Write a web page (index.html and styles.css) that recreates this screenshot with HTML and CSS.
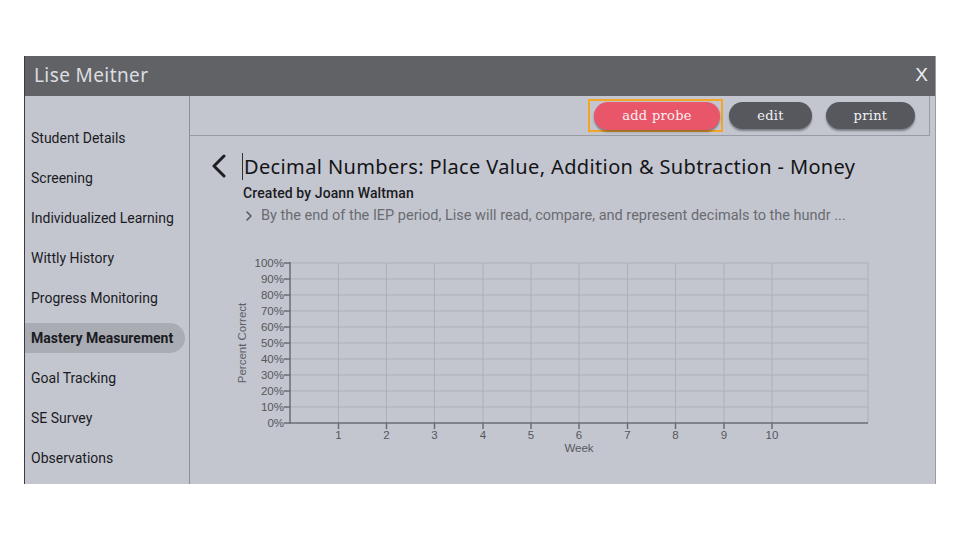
FILE: index.html
```html
<!DOCTYPE html>
<html>
<head>
<meta charset="utf-8">
<link rel="stylesheet" href="styles.css">
</head>
<body>
<div class="frame">
  <header class="topbar">
    <span class="student">Lise Meitner</span>
    <span class="close">X</span>
  </header>
  <div class="body">
    <nav class="sidebar">
      <div class="nav-item">Student Details</div>
      <div class="nav-item">Screening</div>
      <div class="nav-item">Individualized Learning</div>
      <div class="nav-item">Wittly History</div>
      <div class="nav-item">Progress Monitoring</div>
      <div class="nav-item active">Mastery Measurement</div>
      <div class="nav-item">Goal Tracking</div>
      <div class="nav-item">SE Survey</div>
      <div class="nav-item">Observations</div>
    </nav>
    <main class="main">
      <div class="toolbar">
        <span class="focus-ring"><button class="btn btn-add">add probe</button></span>
        <button class="btn btn-edit">edit</button>
        <button class="btn btn-print">print</button>
      </div>
      <section class="content">
        <div class="title-row">
          <svg class="back" width="16" height="24" viewBox="0 0 16 24"><polyline points="13,2 3,12 13,22" fill="none" stroke="#1e1e22" stroke-width="3" stroke-linecap="round" stroke-linejoin="round"/></svg>
          <h1 class="title">Decimal Numbers: Place Value, Addition &amp; Subtraction - Money</h1>
        </div>
        <div class="creator">Created by Joann Waltman</div>
        <div class="goal">
          <svg class="goal-chev" width="8" height="12" viewBox="0 0 8 12"><polyline points="2,2 6,6 2,10" fill="none" stroke="#5a5a5e" stroke-width="1.6" stroke-linecap="round" stroke-linejoin="round"/></svg>
          <span>By the end of the IEP period, Lise will read, compare, and represent decimals to the hundr ...</span>
        </div>
        <svg class="chart" width="660" height="215" viewBox="0 0 660 215">
          <g stroke="#adb0b9" stroke-width="1">
            <line x1="60" y1="13" x2="638" y2="13"/>
            <line x1="60" y1="29" x2="638" y2="29"/>
            <line x1="60" y1="45" x2="638" y2="45"/>
            <line x1="60" y1="61" x2="638" y2="61"/>
            <line x1="60" y1="77" x2="638" y2="77"/>
            <line x1="60" y1="93" x2="638" y2="93"/>
            <line x1="60" y1="109" x2="638" y2="109"/>
            <line x1="60" y1="125" x2="638" y2="125"/>
            <line x1="60" y1="141" x2="638" y2="141"/>
            <line x1="60" y1="157" x2="638" y2="157"/>
            <line x1="108.5" y1="13" x2="108.5" y2="173"/>
            <line x1="156.5" y1="13" x2="156.5" y2="173"/>
            <line x1="204.5" y1="13" x2="204.5" y2="173"/>
            <line x1="253" y1="13" x2="253" y2="173"/>
            <line x1="301" y1="13" x2="301" y2="173"/>
            <line x1="349" y1="13" x2="349" y2="173"/>
            <line x1="397.5" y1="13" x2="397.5" y2="173"/>
            <line x1="445.5" y1="13" x2="445.5" y2="173"/>
            <line x1="494" y1="13" x2="494" y2="173"/>
            <line x1="542" y1="13" x2="542" y2="173"/>
            <line x1="638" y1="13" x2="638" y2="173"/>
          </g>
          <g stroke="#6a6c72" stroke-width="1.5">
            <line x1="60" y1="12" x2="60" y2="173.5"/>
            <line x1="59.5" y1="173" x2="638" y2="173"/>
            <line x1="54" y1="13" x2="60" y2="13"/>
            <line x1="54" y1="29" x2="60" y2="29"/>
            <line x1="54" y1="45" x2="60" y2="45"/>
            <line x1="54" y1="61" x2="60" y2="61"/>
            <line x1="54" y1="77" x2="60" y2="77"/>
            <line x1="54" y1="93" x2="60" y2="93"/>
            <line x1="54" y1="109" x2="60" y2="109"/>
            <line x1="54" y1="125" x2="60" y2="125"/>
            <line x1="54" y1="141" x2="60" y2="141"/>
            <line x1="54" y1="157" x2="60" y2="157"/>
            <line x1="54" y1="173" x2="60" y2="173"/>
            <line x1="108.5" y1="173" x2="108.5" y2="179"/>
            <line x1="156.5" y1="173" x2="156.5" y2="179"/>
            <line x1="204.5" y1="173" x2="204.5" y2="179"/>
            <line x1="253" y1="173" x2="253" y2="179"/>
            <line x1="301" y1="173" x2="301" y2="179"/>
            <line x1="349" y1="173" x2="349" y2="179"/>
            <line x1="397.5" y1="173" x2="397.5" y2="179"/>
            <line x1="445.5" y1="173" x2="445.5" y2="179"/>
            <line x1="494" y1="173" x2="494" y2="179"/>
            <line x1="542" y1="173" x2="542" y2="179"/>
          </g>
          <g class="ylab" text-anchor="end">
            <text x="54" y="17">100%</text>
            <text x="54" y="33">90%</text>
            <text x="54" y="49">80%</text>
            <text x="54" y="65">70%</text>
            <text x="54" y="81">60%</text>
            <text x="54" y="97">50%</text>
            <text x="54" y="113">40%</text>
            <text x="54" y="129">30%</text>
            <text x="54" y="145">20%</text>
            <text x="54" y="161">10%</text>
            <text x="54" y="177">0%</text>
          </g>
          <g class="xlab" text-anchor="middle">
            <text x="108.5" y="189">1</text>
            <text x="156.5" y="189">2</text>
            <text x="204.5" y="189">3</text>
            <text x="253" y="189">4</text>
            <text x="301" y="189">5</text>
            <text x="349" y="189">6</text>
            <text x="397.5" y="189">7</text>
            <text x="445.5" y="189">8</text>
            <text x="494" y="189">9</text>
            <text x="542" y="189">10</text>
            <text x="349" y="202">Week</text>
          </g>
          <text class="ytitle" text-anchor="middle" transform="translate(16,93) rotate(-90)">Percent Correct</text>
        </svg>
      </section>
    </main>
  </div>
</div>
</body>
</html>
```

FILE: styles.css
```css
* { box-sizing: border-box; }
html, body { margin: 0; padding: 0; background: #ffffff; }
body { font-family: Roboto, "Liberation Sans", sans-serif; }

.frame {
  margin: 56px 0 0 24px;
  width: 912px;
  height: 428px;
  display: flex;
  flex-direction: column;
  background: #c3c6cf;
  border-left: 1px solid #3b3c40;
  border-right: 1px solid #9a9ca3;
  overflow: hidden;
}

.topbar {
  height: 40px;
  flex: none;
  background: #606266;
  display: flex;
  align-items: center;
  justify-content: space-between;
  padding: 0 7px 2px 9px;
}
.student {
  font-family: "Noto Sans", sans-serif;
  font-size: 19px;
  color: #dcdde0;
  letter-spacing: 0.4px;
}
.close {
  font-family: "Liberation Sans", sans-serif;
  font-size: 19px;
  color: #eeeeef;
}

.body { flex: 1; display: flex; min-height: 0; }

.sidebar {
  width: 165px;
  flex: none;
  border-right: 1px solid #8d9097;
  padding-top: 27px;
  display: flex;
  flex-direction: column;
  gap: 10px;
}
.nav-item {
  height: 30px;
  flex: none;
  width: 160px;
  display: flex;
  align-items: center;
  padding-left: 6px;
  font-size: 14px;
  color: #1b1b1f;
  border-radius: 0 15px 15px 0;
}
.nav-item.active {
  background: #a9acb3;
  font-weight: 700;
}

.main { flex: 1; display: flex; flex-direction: column; min-width: 0; }

.toolbar {
  height: 40px;
  flex: none;
  margin-right: 5px;
  border-bottom: 1px solid #9a9ca3;
  border-right: 1px solid #9a9ca3;
  display: flex;
  align-items: center;
  justify-content: flex-end;
  padding-right: 14px;
}
.focus-ring {
  display: flex;
  padding: 1px 1px 0 4px;
  border: 2px solid #f5a524;
  margin-right: 6px;
  margin-bottom: 1px;
}
.btn {
  font-family: "DejaVu Serif", "Liberation Serif", serif;
  font-size: 13px;
  color: #f2f2f4;
  border: none;
  height: 28px;
  border-radius: 14px;
  box-shadow: 0 2px 2px rgba(40, 40, 45, 0.45);
  padding: 0;
  letter-spacing: 0.3px;
}
.btn-add { background: #e9566a; width: 126px; color: #fbeff1; }
.btn-edit { background: #56585d; width: 83px; height: 27px; margin-right: 14px; }
.btn-print { background: #56585d; width: 89px; height: 27px; }

.content { padding: 16px 0 0 21px; }

.title-row { display: flex; align-items: center; height: 28px; }
.back { margin-right: 15px; flex: none; }
.title {
  margin: 0;
  font-family: "Noto Sans", sans-serif;
  font-weight: 400;
  font-size: 20px;
  color: #141418;
  border-left: 1px solid #333;
  padding-left: 1px;
  white-space: nowrap;
  letter-spacing: 0.37px;
}

.creator {
  margin: 3px 0 0 32px;
  font-size: 14px;
  font-weight: 500;
  color: #1b1b1f;
  line-height: 20px;
  letter-spacing: 0.1px;
}
.goal {
  margin: 3px 0 0 34px;
  display: flex;
  align-items: center;
  font-size: 14.5px;
  color: #6a6b70;
  line-height: 20px;
}
.goal-chev { margin-right: 8px; }

.chart { display: block; margin: 24px 0 0 19px; }
.ylab, .xlab { font-family: "Liberation Sans", sans-serif; font-size: 11.5px; fill: #55575c; }
.ytitle { font-family: "Liberation Sans", sans-serif; font-size: 11.5px; fill: #5d5f64; }
```
